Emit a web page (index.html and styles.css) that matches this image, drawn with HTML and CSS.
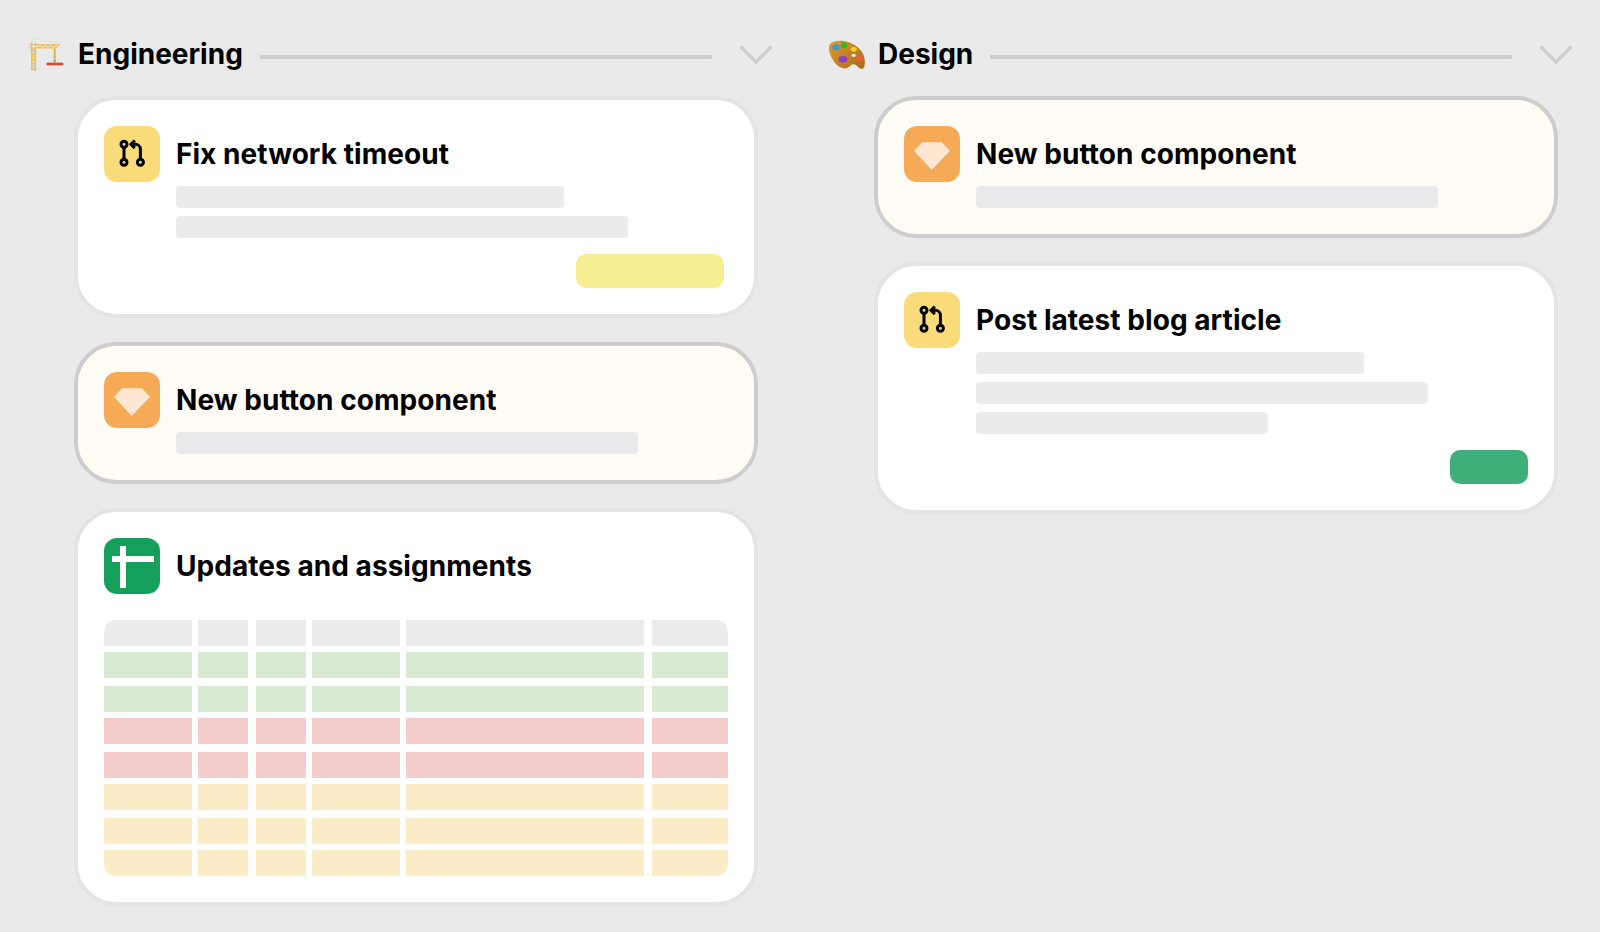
FILE: index.html
```html
<!DOCTYPE html>
<html lang="en">
<head>
<meta charset="utf-8">
<title>Board</title>
<link rel="stylesheet" href="styles.css">
</head>
<body>
<main class="board">
  <section class="column">
    <header class="column-head">
      <svg class="emoji" viewBox="24 21 108 108" aria-hidden="true">
        <path class="crane-cable" d="M42 24 L118 43 M42 24 L30 43"/>
        <path class="crane-hook" d="M104 55 V90"/>
        <path class="crane-block" d="M100 90 H108 V97 H100 Z"/>
        <rect class="crane-load" x="80" y="98" width="50" height="8"/>
        <path class="crane-steel" d="M35 36 V122 M47 36 V122 M28 44 H120 M28 54 H104 M35 54 L47 68 L35 82 L47 96 L35 110 L47 122 M47 54 L35 68 L47 82 L35 96 L47 110 L35 122 M52 44 L60 54 L68 44 L76 54 L84 44 L92 54 L100 44 L108 54 L116 44"/>
      </svg>
      <h2 class="column-title">Engineering</h2>
      <span class="rule"></span>
      <svg class="chevron" viewBox="0 0 32 18" aria-hidden="true"><path d="M1.5 1.5 L16 16 L30.5 1.5"/></svg>
    </header>
    <div class="cards">
      <article class="card">
        <div class="card-head">
          <span class="icon icon-pr"><svg viewBox="0 0 56 56" aria-hidden="true"><circle cx="20" cy="18.3" r="3"/><circle cx="20" cy="36.3" r="3"/><circle cx="36.4" cy="36.3" r="3"/><path d="M20 21.3 V33.3 M36.4 33.3 V23.3 a5 5 0 0 0 -5 -5 H27.5 M30.8 14.5 L27 18.3 L30.8 22.1"/></svg></span>
          <h3 class="card-title">Fix network timeout</h3>
        </div>
        <div class="lines">
          <span class="line w-388"></span>
          <span class="line w-452"></span>
        </div>
        <div class="actions"><span class="btn btn-yellow"></span></div>
      </article>
      <article class="card card-active">
        <div class="card-head">
          <span class="icon icon-gem"><svg viewBox="0 0 56 56" aria-hidden="true"><path d="M18.3 16.3 H37.7 L46 24.7 L27.7 44 L10 24.7 Z"/></svg></span>
          <h3 class="card-title">New button component</h3>
        </div>
        <div class="lines"><span class="line w-462"></span></div>
      </article>
      <article class="card">
        <div class="card-head">
          <span class="icon icon-sheet"><svg viewBox="0 0 56 56" aria-hidden="true"><rect x="16" y="8" width="6" height="42"/><rect x="8" y="18" width="42" height="6"/></svg></span>
          <h3 class="card-title">Updates and assignments</h3>
        </div>
        <div class="sheet">
          <div class="row row-head"><span></span><span></span><span></span><span></span><span></span><span></span></div>
          <div class="row row-green"><span></span><span></span><span></span><span></span><span></span><span></span></div>
          <div class="row row-green"><span></span><span></span><span></span><span></span><span></span><span></span></div>
          <div class="row row-red"><span></span><span></span><span></span><span></span><span></span><span></span></div>
          <div class="row row-red"><span></span><span></span><span></span><span></span><span></span><span></span></div>
          <div class="row row-yellow"><span></span><span></span><span></span><span></span><span></span><span></span></div>
          <div class="row row-yellow"><span></span><span></span><span></span><span></span><span></span><span></span></div>
          <div class="row row-yellow"><span></span><span></span><span></span><span></span><span></span><span></span></div>
        </div>
      </article>
    </div>
  </section>
  <section class="column">
    <header class="column-head">
      <svg class="emoji" viewBox="24 21 108 108" aria-hidden="true">
        <defs>
          <linearGradient id="wood" x1="0" y1="0" x2="1" y2="1">
            <stop offset="0" stop-color="#dc9c2c"/>
            <stop offset="1" stop-color="#a96a1c"/>
          </linearGradient>
        </defs>
        <path fill="url(#wood)" d="M30 42 C42 30 68 30 90 38 C114 47 132 66 134 88 C136 102 134 116 126 117 C117 118 112 106 103 103 C96 101 92 107 85 112 C75 120 58 114 46 100 C36 88 20 58 30 42 Z"/>
        <ellipse class="paint-hole" cx="101" cy="76" rx="6" ry="5"/>
        <ellipse class="paint-blue" cx="48" cy="52" rx="11" ry="9"/>
        <ellipse class="paint-green" cx="72" cy="46" rx="10" ry="9"/>
        <ellipse class="paint-yellow" cx="101" cy="58" rx="9" ry="7"/>
        <ellipse class="paint-red" cx="120" cy="85" rx="8" ry="10"/>
        <ellipse class="paint-purple" cx="69" cy="88" rx="13" ry="10"/>
      </svg>
      <h2 class="column-title">Design</h2>
      <span class="rule"></span>
      <svg class="chevron" viewBox="0 0 32 18" aria-hidden="true"><path d="M1.5 1.5 L16 16 L30.5 1.5"/></svg>
    </header>
    <div class="cards">
      <article class="card card-active">
        <div class="card-head">
          <span class="icon icon-gem"><svg viewBox="0 0 56 56" aria-hidden="true"><path d="M18.3 16.3 H37.7 L46 24.7 L27.7 44 L10 24.7 Z"/></svg></span>
          <h3 class="card-title">New button component</h3>
        </div>
        <div class="lines"><span class="line w-462"></span></div>
      </article>
      <article class="card">
        <div class="card-head">
          <span class="icon icon-pr"><svg viewBox="0 0 56 56" aria-hidden="true"><circle cx="20" cy="18.3" r="3"/><circle cx="20" cy="36.3" r="3"/><circle cx="36.4" cy="36.3" r="3"/><path d="M20 21.3 V33.3 M36.4 33.3 V23.3 a5 5 0 0 0 -5 -5 H27.5 M30.8 14.5 L27 18.3 L30.8 22.1"/></svg></span>
          <h3 class="card-title">Post latest blog article</h3>
        </div>
        <div class="lines">
          <span class="line w-388"></span>
          <span class="line w-452"></span>
          <span class="line w-292"></span>
        </div>
        <div class="actions"><span class="btn btn-green"></span></div>
      </article>
    </div>
  </section>
</main>
</body>
</html>
```
FILE: styles.css
```css
* { box-sizing: border-box; }
html, body { margin: 0; height: 100%; }
body {
  background: #eaeaea;
  color: #000;
  font-family: Inter, "Liberation Sans", sans-serif;
  overflow: hidden;
}
.board {
  display: grid;
  grid-template-columns: 1fr 1fr;
  column-gap: 56px;
  padding: 37px 28px 0;
}
.column-head {
  display: flex;
  align-items: center;
  height: 36px;
  margin-bottom: 23px;
}
.emoji { width: 36px; height: 36px; margin-right: 14px; flex: none; overflow: visible; }
.column-title {
  margin: 0 0 2px;
  font-size: 28px;
  font-weight: 700;
  line-height: 34px;
  white-space: nowrap;
}
.rule {
  flex: 1;
  height: 4px;
  margin: 4px 28px 0 17px;
  background: #cdcdcd;
  border-radius: 1px;
}
.chevron { width: 32px; height: 18px; flex: none; }
.chevron path { fill: none; stroke: #cdcdcd; stroke-width: 3.6; stroke-linecap: round; stroke-linejoin: round; }

.crane-cable { fill: none; stroke: #d2cfc6; stroke-width: 1.2; }
.crane-hook { fill: none; stroke: #d9b54c; stroke-width: 6; }
.crane-block { fill: #a9a598; }
.crane-load { fill: #d24a30; }
.crane-steel { fill: none; stroke: #e6bf55; stroke-width: 3.2; }
.paint-hole { fill: #f5f1ea; }
.paint-blue { fill: #2f9be0; }
.paint-green { fill: #35b82e; }
.paint-yellow { fill: #f2d02c; }
.paint-red { fill: #ee5a3c; }
.paint-purple { fill: #8a3ccf; }

.cards { display: flex; flex-direction: column; gap: 24px; margin: 0 14px 0 46px; }
.card {
  background: #fff;
  border: 4px solid #e4e4e4;
  border-radius: 42px;
  padding: 26px;
}
.card-active { background: #fffcf6; border-color: #cdcdcd; }
.card-head { display: flex; align-items: center; gap: 16px; height: 56px; }
.card-title {
  margin: 0;
  font-size: 28px;
  font-weight: 700;
  letter-spacing: 0.05px;
  line-height: 56px;
  white-space: nowrap;
}
.icon { display: block; width: 56px; height: 56px; border-radius: 13px; flex: none; }
.icon svg { display: block; width: 56px; height: 56px; }
.icon-pr { background: #f9db79; }
.icon-pr svg { fill: none; stroke: #000; stroke-width: 3; }
.icon-gem { background: #f5aa56; }
.icon-gem svg { fill: #fde6d2; }
.icon-sheet { background: #14a05a; }
.icon-sheet svg { fill: #fff; }

.lines { display: flex; flex-direction: column; gap: 8px; margin: 4px 0 0 72px; }
.line { display: block; height: 22px; background: #ebebeb; border-radius: 4px; }
.card-active .line { background: #eaeaec; }
.w-292 { width: 292px; }
.w-388 { width: 388px; }
.w-452 { width: 452px; }
.w-462 { width: 462px; }

.actions { display: flex; justify-content: flex-end; margin-top: 16px; }
.btn { display: block; height: 34px; border-radius: 10px; }
.btn-yellow { width: 148px; margin-right: 4px; background: #f7ee94; }
.btn-green { width: 78px; background: #3fae78; }

.sheet { margin-top: 26px; border-radius: 12px; overflow: hidden; }
.row { display: flex; gap: 6px; height: 26px; margin-bottom: 6px; }
.row:nth-child(even) { margin-bottom: 8px; }
.row:last-child { margin-bottom: 0; }
.row span { display: block; }
.row span:nth-child(1) { width: 88px; }
.row span:nth-child(2) { width: 50px; }
.row span:nth-child(3) { width: 50px; margin-left: 2px; }
.row span:nth-child(4) { width: 88px; }
.row span:nth-child(5) { width: 238px; }
.row span:nth-child(6) { width: 76px; margin-left: 2px; }
.row-head span { background: #ececec; }
.row-green span { background: #d9ead3; }
.row-red span { background: #f4cccc; }
.row-yellow span { background: #fcecc8; }
```
